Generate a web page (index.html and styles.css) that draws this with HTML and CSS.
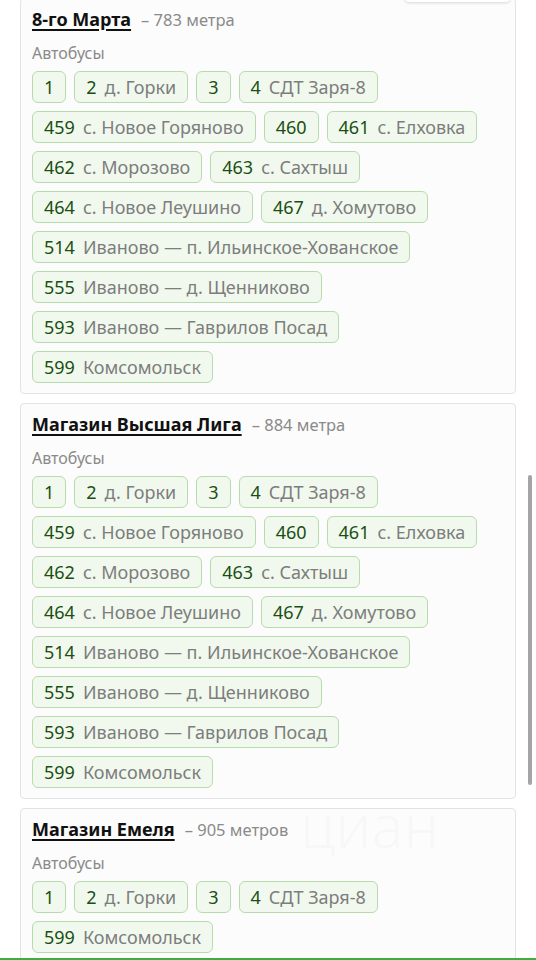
FILE: index.html
```html
<!DOCTYPE html>
<html lang="ru">
<head>
<meta charset="utf-8">
<link rel="stylesheet" href="styles.css">
</head>
<body>
<div class="topbtn"></div>
<div class="list">
  <section class="card">
    <div class="title"><a class="name">8-го Марта</a><span class="dist">– 783 метра</span></div>
    <div class="kind">Автобусы</div>
    <div class="chips">
      <span class="chip"><b>1</b></span>
      <span class="chip"><b>2</b><i>д. Горки</i></span>
      <span class="chip"><b>3</b></span>
      <span class="chip"><b>4</b><i>СДТ Заря-8</i></span>
      <span class="chip"><b>459</b><i>с. Новое Горяново</i></span>
      <span class="chip"><b>460</b></span>
      <span class="chip"><b>461</b><i>с. Елховка</i></span>
      <span class="chip"><b>462</b><i>с. Морозово</i></span>
      <span class="chip"><b>463</b><i>с. Сахтыш</i></span>
      <span class="chip"><b>464</b><i>с. Новое Леушино</i></span>
      <span class="chip"><b>467</b><i>д. Хомутово</i></span>
      <span class="chip"><b>514</b><i>Иваново — п. Ильинское-Хованское</i></span>
      <span class="chip"><b>555</b><i>Иваново — д. Щенниково</i></span>
      <span class="chip"><b>593</b><i>Иваново — Гаврилов Посад</i></span>
      <span class="chip"><b>599</b><i>Комсомольск</i></span>
    </div>
  </section>
  <section class="card">
    <div class="title"><a class="name">Магазин Высшая Лига</a><span class="dist">– 884 метра</span></div>
    <div class="kind">Автобусы</div>
    <div class="chips">
      <span class="chip"><b>1</b></span>
      <span class="chip"><b>2</b><i>д. Горки</i></span>
      <span class="chip"><b>3</b></span>
      <span class="chip"><b>4</b><i>СДТ Заря-8</i></span>
      <span class="chip"><b>459</b><i>с. Новое Горяново</i></span>
      <span class="chip"><b>460</b></span>
      <span class="chip"><b>461</b><i>с. Елховка</i></span>
      <span class="chip"><b>462</b><i>с. Морозово</i></span>
      <span class="chip"><b>463</b><i>с. Сахтыш</i></span>
      <span class="chip"><b>464</b><i>с. Новое Леушино</i></span>
      <span class="chip"><b>467</b><i>д. Хомутово</i></span>
      <span class="chip"><b>514</b><i>Иваново — п. Ильинское-Хованское</i></span>
      <span class="chip"><b>555</b><i>Иваново — д. Щенниково</i></span>
      <span class="chip"><b>593</b><i>Иваново — Гаврилов Посад</i></span>
      <span class="chip"><b>599</b><i>Комсомольск</i></span>
    </div>
  </section>
  <section class="card">
    <div class="title"><a class="name">Магазин Емеля</a><span class="dist">– 905 метров</span></div>
    <div class="kind">Автобусы</div>
    <div class="chips">
      <span class="chip"><b>1</b></span>
      <span class="chip"><b>2</b><i>д. Горки</i></span>
      <span class="chip"><b>3</b></span>
      <span class="chip"><b>4</b><i>СДТ Заря-8</i></span>
      <span class="chip"><b>599</b><i>Комсомольск</i></span>
    </div>
  </section>
</div>
<div class="watermark">циан</div>
<div class="scrollbar"></div>
<div class="bottomline"></div>
</body>
</html>
```
FILE: styles.css
```css
html, body {
  margin: 0;
  padding: 0;
  background: #ffffff;
  font-family: "Noto Sans", "Open Sans", sans-serif;
  overflow: hidden;
  height: 960px;
}
.list {
  margin-top: -2px;
  padding: 0 20px 0 20px;
  display: flex;
  flex-direction: column;
  gap: 9px;
}
.card {
  border: 1px solid #e3e3e3;
  border-radius: 4px;
  background: #fcfcfc;
  padding: 8px 11px 10px 11px;
}
.title {
  height: 24px;
  line-height: 24px;
  display: flex;
  align-items: baseline;
  gap: 10px;
}
.name {
  font-size: 18px;
  font-weight: 700;
  color: #111;
  text-decoration: underline;
  text-underline-offset: 3px;
  text-decoration-thickness: 2px;
}
.dist {
  font-size: 16.5px;
  color: #8a8a8a;
}
.kind {
  margin-top: 12px;
  font-size: 16px;
  line-height: 20px;
  color: #8a8a8a;
}
.chips {
  margin-top: 8px;
  display: flex;
  flex-wrap: wrap;
  gap: 8px;
}
.chip {
  height: 32px;
  box-sizing: border-box;
  border: 1px solid #b8dbae;
  border-radius: 6px;
  background: #f1f9ee;
  padding: 0 11px;
  display: inline-flex;
  align-items: center;
  gap: 8px;
  font-size: 18px;
  line-height: 30px;
}
.chip b {
  font-weight: 400;
  color: #1a4f12;
}
.chip i {
  font-style: normal;
  color: #7d7d7d;
}
.topbtn {
  position: absolute;
  left: 405px;
  top: -20px;
  width: 105px;
  height: 22px;
  background: #fff;
  border-radius: 4px;
  box-shadow: 0 1px 3px rgba(0,0,0,0.15);
}
.watermark {
  position: absolute;
  left: 300px;
  top: 790px;
  font-size: 60px;
  font-weight: 300;
  line-height: 70px;
  color: rgba(0,0,0,0.02);
  pointer-events: none;
}
.scrollbar {
  position: absolute;
  left: 528px;
  top: 475px;
  width: 4px;
  height: 310px;
  border-radius: 2px;
  background: #a5a5a5;
}
.bottomline {
  position: fixed;
  left: 0;
  right: 0;
  bottom: 0;
  height: 2px;
  background: #3fae3f;
}
```
